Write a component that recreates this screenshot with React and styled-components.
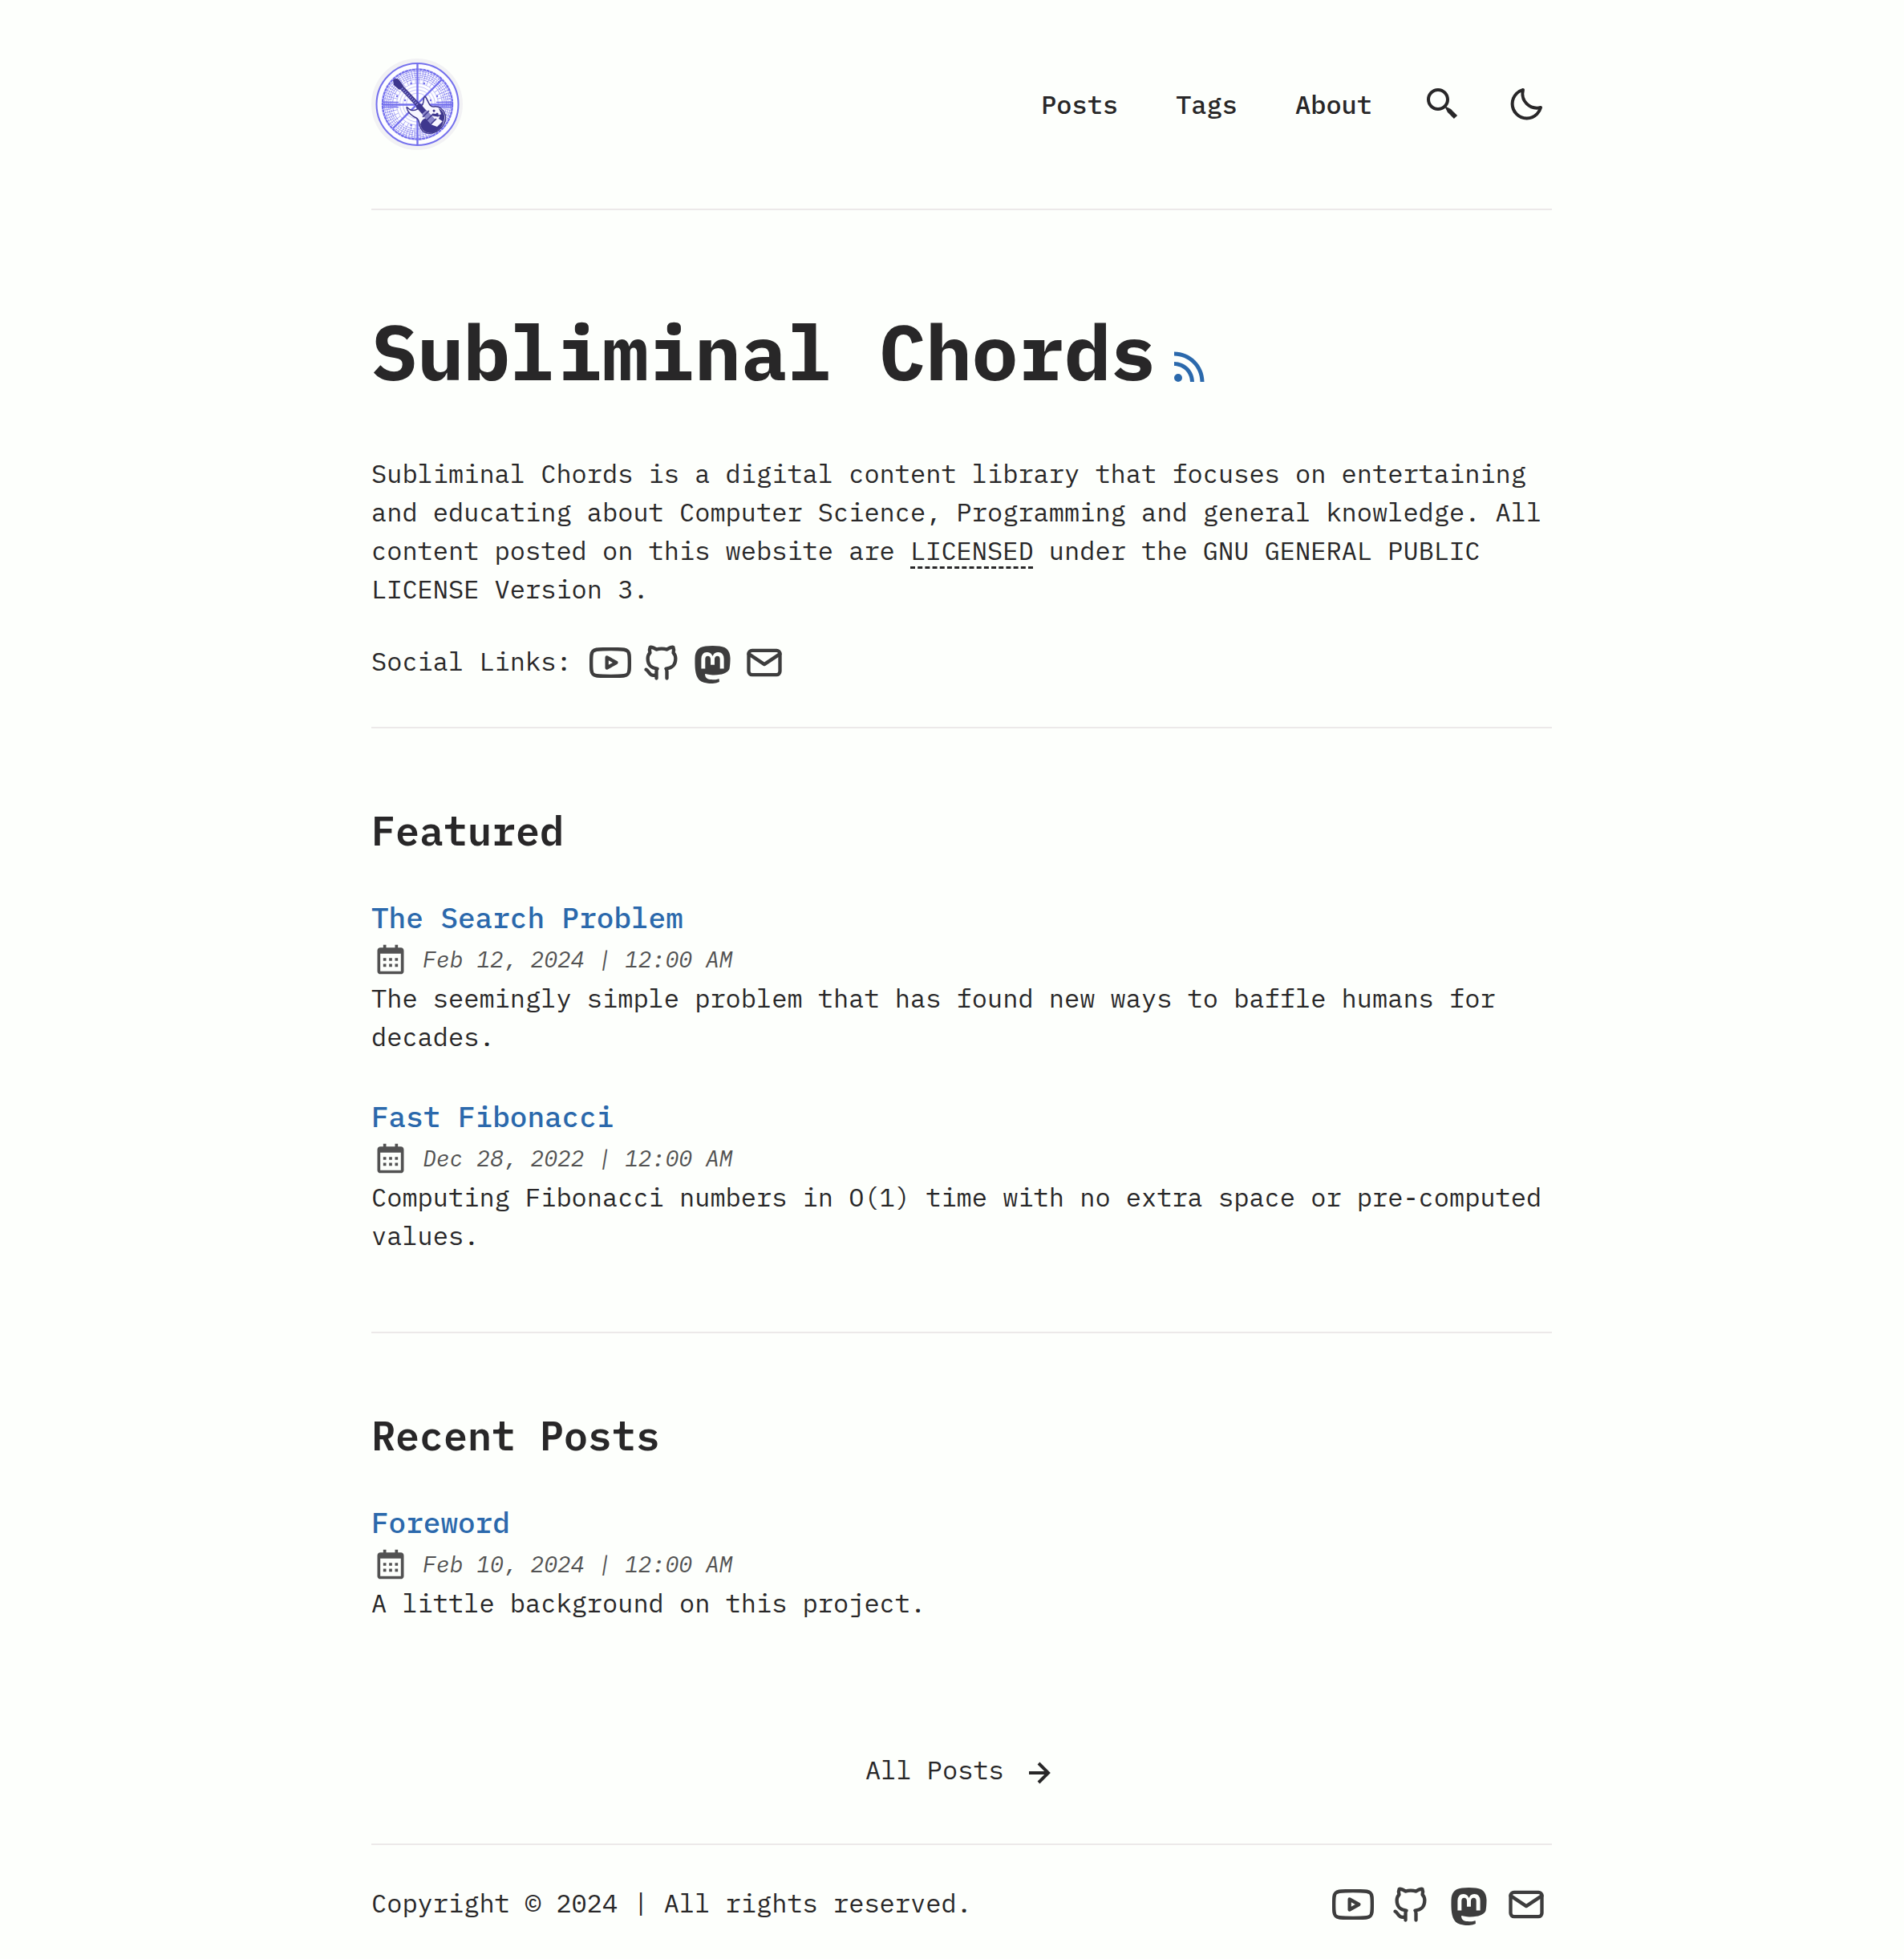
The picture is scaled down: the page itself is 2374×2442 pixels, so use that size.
import React from 'react';
import styled, { createGlobalStyle } from 'styled-components';
import { BsMastodon } from 'react-icons/bs';

const Global = createGlobalStyle`
  * { box-sizing: border-box; margin: 0; padding: 0; }
  body {
    background: #fdfffc;
    color: #282728;
    font-family: "IBM Plex Mono", "Liberation Mono", monospace;
    font-size: 32px;
    line-height: 48px;
  }
  a { color: inherit; text-decoration: none; }
  ul { list-style: none; }
  svg { display: block; flex: none; }
`;

const Page = styled.div`
  width: 100%;
  max-width: 1496px;
  margin: 0 auto;
  padding-left: 24px;
`;
const Header = styled.header`
  display: flex;
  align-items: center;
  justify-content: space-between;
  padding: 73px 0;
  border-bottom: 2px solid #ece9e9;
`;
const LogoLink = styled.a`
  display: block;
`;
const Nav = styled.nav`
  display: flex;
  align-items: center;
  gap: 64px;
`;
const NavLinks = styled.ul`
  display: flex;
  gap: 72px;
  font-weight: 500;
`;
const IconTools = styled.div`
  display: flex;
  align-items: center;
  gap: 56px;
  padding-right: 8px;
`;
const ToolButton = styled.button`
  background: none;
  border: 0;
  color: inherit;
  cursor: pointer;
`;
const Section = styled.section`
  padding: ${(p) => p.$pad};
  border-bottom: ${(p) => (p.$plain ? '0' : '2px solid #ece9e9')};
`;
const TitleRow = styled.div`
  display: flex;
  align-items: flex-end;
  gap: 12px;
`;
const Title = styled.h1`
  font-size: 96px;
  line-height: 96px;
  font-weight: 700;
`;
const RssLink = styled.a`
  color: #2b69ac;
`;
const Intro = styled.p`
  margin-top: 80px;
`;
const DashedLink = styled.a`
  text-decoration: underline dashed 3px;
  text-underline-offset: 8px;
`;
const SocialRow = styled.div`
  display: flex;
  align-items: flex-start;
  gap: 22px;
  margin-top: 42px;
`;
const SocialList = styled.ul`
  display: flex;
  gap: ${(p) => p.$gap};
  color: #3d3d3d;
`;
const SocialLink = styled.a`
  display: flex;
  align-items: flex-end;
  justify-content: center;
  width: 52px;
  height: 52px;
`;
const SectionTitle = styled.h2`
  font-size: 50px;
  line-height: 64px;
  font-weight: 600;
`;
const PostList = styled.ul`
  display: grid;
  gap: 48px;
  margin-top: 48px;
`;
const PostTitle = styled.h3`
  color: #2b69ac;
  font-size: 36px;
  line-height: 56px;
  font-weight: 500;
`;
const PostDate = styled.div`
  display: flex;
  align-items: center;
  gap: 18px;
  padding-left: 2px;
  color: #525252;
  font-size: 28px;
  font-style: italic;
`;
const AllPosts = styled.div`
  display: flex;
  justify-content: center;
  padding: 64px 0;
  border-bottom: 2px solid #ece9e9;
`;
const AllLink = styled.a`
  svg {
    display: inline-block;
    vertical-align: middle;
  }
`;
const Footer = styled.footer`
  display: flex;
  align-items: flex-start;
  justify-content: space-between;
  padding: 48px 6px 40px 0;
`;

function Stroke({ size, children }) {
  return (
    <svg width={size} height={size} viewBox="0 0 24 24" fill="none" stroke="currentColor"
      strokeWidth="2" strokeLinecap="round" strokeLinejoin="round" aria-hidden="true">
      {children}
    </svg>
  );
}
function Solid({ size, d }) {
  return (
    <svg width={size} height={size} viewBox="0 0 24 24" fill="currentColor" aria-hidden="true">
      <path d={d} />
    </svg>
  );
}

const SEARCH = 'M19.023 16.977a35.13 35.13 0 0 1-1.367-1.384c-.372-.378-.596-.653-.596-.653l-2.8-1.337A6.962 6.962 0 0 0 16 9c0-3.859-3.14-7-7-7S2 5.141 2 9s3.14 7 7 7c1.763 0 3.37-.66 4.603-1.739l1.337 2.8s.275.224.653.596c.387.363.896.854 1.384 1.367l1.358 1.392.604.646 2.121-2.121-.646-.604c-.379-.372-.885-.866-1.391-1.36zM9 14c-2.757 0-5-2.243-5-5s2.243-5 5-5 5 2.243 5 5-2.243 5-5 5z';
const MOON = 'M20.742 13.045a8.088 8.088 0 0 1-2.077.271c-2.135 0-4.14-.83-5.646-2.336a8.025 8.025 0 0 1-2.064-7.723A1 1 0 0 0 9.73 2.034a10.014 10.014 0 0 0-4.489 2.582c-3.898 3.898-3.898 10.243 0 14.143a9.937 9.937 0 0 0 7.072 2.93 9.93 9.93 0 0 0 7.07-2.929 10.007 10.007 0 0 0 2.583-4.491 1.001 1.001 0 0 0-1.224-1.224zm-2.772 4.301a7.947 7.947 0 0 1-5.656 2.343 7.953 7.953 0 0 1-5.658-2.344c-3.118-3.119-3.118-8.195 0-11.314a7.923 7.923 0 0 1 2.06-1.483 10.027 10.027 0 0 0 2.89 7.848 9.972 9.972 0 0 0 7.848 2.891 8.036 8.036 0 0 1-1.484 2.059z';
const RSS = 'M19 20.001C19 11.729 12.271 5 4 5v2c7.168 0 13 5.832 13 13.001h2z M12 20.001h2C14 14.486 9.514 10 4 10v2c4.411 0 8 3.589 8 8.001z M6 16a2 2 0 1 0 0 4 2 2 0 0 0 0-4z';
const ARROW = 'm11.293 17.293 1.414 1.414L19.414 12l-6.707-6.707-1.414 1.414L15.586 11H6v2h9.586z';
const CALENDAR = 'M19 4h-2V2h-2v2H9V2H7v2H5c-1.103 0-2 .897-2 2v14c0 1.103.897 2 2 2h14c1.103 0 2-.897 2-2V6c0-1.103-.897-2-2-2zm.002 16H5V8h14l.002 12z M7 11h2v2H7zm0 4h2v2H7zm4-4h2v2h-2zm0 4h2v2h-2zm4-4h2v2h-2zm0 4h2v2h-2z';

function Logo() {
  return (
    <svg width="114" height="114" viewBox="0 0 114 114" aria-label="Subliminal Chords" role="img">
      <circle cx="57" cy="57" r="57" fill="#f2f2f4" />
      <circle cx="57.5" cy="57" r="51" fill="#fdfdff" stroke="#7470ed" strokeWidth="2" />
      <g fill="none" stroke="#7470ed">
        <circle cx="57.5" cy="57" r="43.5" strokeWidth="2.4" strokeDasharray="4 .5" />
        {[41, 38.5, 36, 33.5, 31].map((r) => (
          <circle key={r} cx="57.5" cy="57" r={r} strokeWidth="1" opacity=".75" strokeDasharray="6 1 3 1" />
        ))}
        {[26, 22, 18, 14].map((r) => (
          <circle key={r} cx="57.5" cy="57" r={r} strokeWidth=".7" opacity=".6" />
        ))}
        {Array.from({ length: 72 }, (_, i) => (
          <path key={i} d={i % 2 ? 'M57.5 14v17' : 'M57.5 14v10'} transform={`rotate(${i * 5} 57.5 57)`} strokeWidth=".8" opacity=".65" />
        ))}
        <path d="M57.5 6v102" strokeWidth="2.4" />
        <path d="M14 57.500h87" strokeWidth="2.4" />
        <path d="M14 54.500h20M14 60.500h20M81 54.500h20M81 60.500h20" strokeWidth="1.6" />
        <path d="M27 87 88 26" strokeWidth="2.4" />
      </g>
      <g fill="#7470ed">
        <circle cx="32" cy="47" r="1.200" />
        <circle cx="82" cy="47" r="1.200" />
        <circle cx="42" cy="52" r="1.200" />
        <circle cx="74" cy="52" r="1.200" />
        <circle cx="49.500" cy="31" r="1.200" />
        <circle cx="66" cy="31" r="1.200" />
        <circle cx="49.500" cy="83" r="1.200" />
      </g>
      <path d="M44 61c1 6 7 11 12 13 5 3 3 8 5 11 3 9 12 10 20 6 9-5 13-14 11-21-2-7-8-11-14-10-6 1-7-8-11-13-3 2-1 7-3 10-3 5-10 9-15 7-3-1-4-4-5-3z" fill="#f8f7ff" stroke="#3e378e" strokeWidth="1.5" strokeLinejoin="round" />
      <path d="M61 82c2-6 5-8 9-8l4 8 8 3 8-8c0 6-5 12-10 14-8 4-17 1-19-9z" fill="#3e378e" />
      <path d="M84 62c6 3 9 9 6 17l-6-4 3-6z" fill="#3e378e" />
      <path d="m33 31 29 31" stroke="#3e378e" strokeWidth="5.500" />
      <path d="m38 37 24 25" stroke="#8581d2" strokeWidth="3" strokeDasharray="1.500 1.500" />
      <path d="M27 27c1-2 6-3 8 0l5 7-5 5-7-6z" fill="#3e378e" />
      <path d="m58 58 8 9" stroke="#3e378e" strokeWidth="7" />
      <path d="m66 67 11 12" stroke="#8a86c9" strokeWidth="8" />
      <path d="m64 73 8-8m-4 13 8-8m-3 13 8-8" stroke="#3e378e" strokeWidth="1.600" />
      <path d="m78 65 .1.1M82 69l.1.1M86 71l.1.1M77 70l6 1" stroke="#3e378e" strokeWidth="3" strokeLinecap="round" />
    </svg>
  );
}

function Socials({ gap }) {
  return (
    <SocialList $gap={gap}>
      <li><SocialLink href="#youtube" aria-label="YouTube">
        <Stroke size={52}>
          <path d="M1 12.800v-1.600c0-3.200 0-4.800 1-5.800 1-1 2.500-1.050 5.700-1.140C9.200 4.220 10.700 4.200 12 4.200s2.800.020 4.300.060C19.500 4.350 21 4.400 22 5.400c1 1 1 2.600 1 5.800v1.600c0 3.200 0 4.800-1 5.800-1 1-2.500 1.050-5.700 1.140-1.500.040-3 .060-4.300.060s-2.800-.020-4.300-.060C4.500 19.650 3 19.600 2 18.600c-1-1-1-2.600-1-5.800z" />
          <path d="m10 9 5.400 3-5.400 3z" />
        </Stroke>
      </SocialLink></li>
      <li><SocialLink href="#github" aria-label="GitHub">
        <Stroke size={52}>
          <path d="M9 19c-4.300 1.400-4.300-2.500-6-3m12 5v-3.500c0-1 .1-1.400-.5-2 2.800-.3 5.500-1.400 5.500-6a4.600 4.600 0 0 0-1.300-3.200 4.200 4.200 0 0 0-.1-3.200s-1.100-.3-3.500 1.300a12.300 12.300 0 0 0-6.200 0C6.500 2.800 5.400 3.100 5.400 3.100a4.200 4.200 0 0 0-.1 3.200A4.600 4.600 0 0 0 4 9.500c0 4.600 2.700 5.700 5.500 6-.6.600-.6 1.200-.5 2V21" />
        </Stroke>
      </SocialLink></li>
      <li><SocialLink href="#mastodon" aria-label="Mastodon"><BsMastodon size={47} /></SocialLink></li>
      <li><SocialLink href="#mail" aria-label="Email">
        <Stroke size={52}>
          <rect x="3" y="5" width="18" height="14" rx="2" />
          <path d="m3 7 9 6 9-6" />
        </Stroke>
      </SocialLink></li>
    </SocialList>
  );
}

function Post({ title, date, children }) {
  return (
    <li>
      <PostTitle><a href="#post">{title}</a></PostTitle>
      <PostDate><Solid size={44} d={CALENDAR} /><time>{date}</time></PostDate>
      <p>{children}</p>
    </li>
  );
}

export default function App() {
  return (
    <>
      <Global />
      <Page>
        <Header>
          <LogoLink href="#home"><Logo /></LogoLink>
          <Nav>
            <NavLinks>
              <li><a href="#posts">Posts</a></li>
              <li><a href="#tags">Tags</a></li>
              <li><a href="#about">About</a></li>
            </NavLinks>
            <IconTools>
              <a href="#search" aria-label="Search"><Solid size={48} d={SEARCH} /></a>
              <ToolButton type="button" aria-label="Toggle theme"><Solid size={48} d={MOON} /></ToolButton>
            </IconTools>
          </Nav>
        </Header>
        <main>
          <Section $pad="128px 0 54px">
            <TitleRow>
              <Title>Subliminal Chords</Title>
              <RssLink href="#rss" aria-label="RSS feed">
                <Solid size={60} d={RSS} />
              </RssLink>
            </TitleRow>
            <Intro>
              Subliminal Chords is a digital content library that focuses on entertaining and educating about
              Computer Science, Programming and general knowledge. All content posted on this website are{' '}
              <DashedLink href="#license">LICENSED</DashedLink> under the GNU GENERAL PUBLIC LICENSE Version 3.
            </Intro>
            <SocialRow>
              <span>Social Links:</span>
              <Socials gap="12px" />
            </SocialRow>
          </Section>
          <Section $pad="96px 0">
            <SectionTitle>Featured</SectionTitle>
            <PostList>
              <Post title="The Search Problem" date="Feb 12, 2024 | 12:00 AM">
                The seemingly simple problem that has found new ways to baffle humans for decades.
              </Post>
              <Post title="Fast Fibonacci" date="Dec 28, 2022 | 12:00 AM">
                Computing Fibonacci numbers in O(1) time with no extra space or pre-computed values.
              </Post>
            </PostList>
          </Section>
          <Section $pad="96px 0" $plain>
            <SectionTitle>Recent Posts</SectionTitle>
            <PostList>
              <Post title="Foreword" date="Feb 10, 2024 | 12:00 AM">A little background on this project.</Post>
            </PostList>
          </Section>
          <AllPosts>
            <AllLink href="#all">All Posts <Solid size={48} d={ARROW} /></AllLink>
          </AllPosts>
        </main>
        <Footer>
          <span>Copyright © 2024 | All rights reserved.</span>
          <Socials gap="20px" />
        </Footer>
      </Page>
    </>
  );
}
